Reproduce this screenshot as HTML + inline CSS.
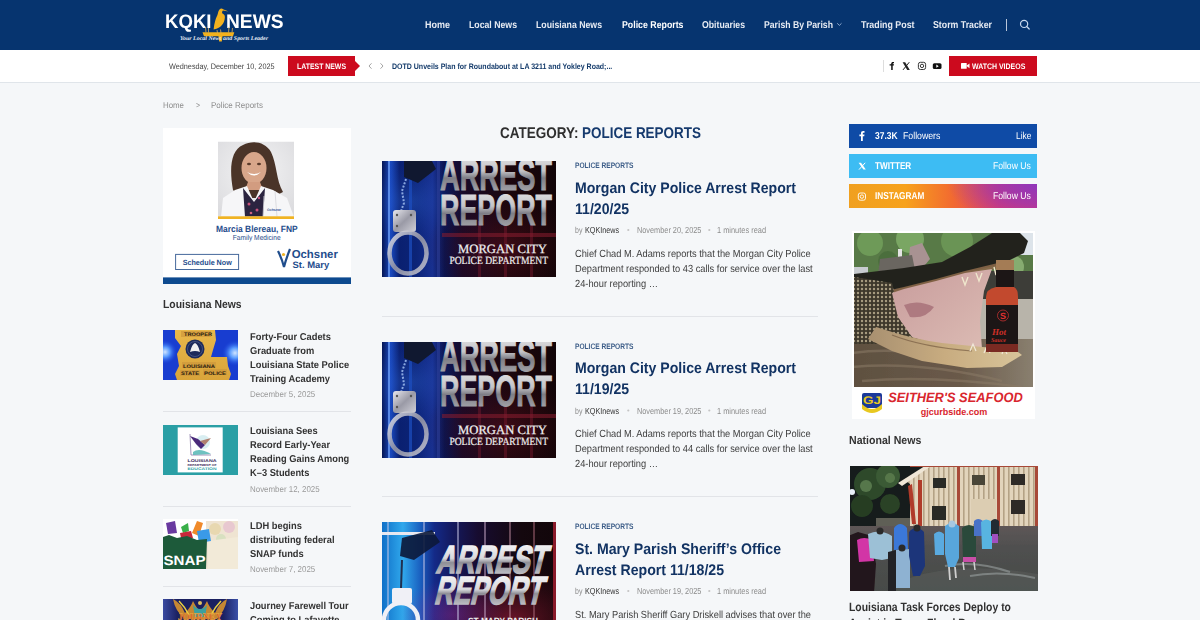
<!DOCTYPE html>
<html><head><meta charset="utf-8">
<style>
*{margin:0;padding:0;box-sizing:border-box}
html,body{width:1200px;height:620px;overflow:hidden;background:#f5f7f9;font-family:"Liberation Sans",sans-serif;color:#313131;text-rendering:geometricPrecision}
.a{position:absolute;white-space:nowrap}
.s{position:absolute}
</style></head><body>
<div class="s" style="left:0;top:0;width:1200px;height:50px;background:#06346f"></div>
<div class="s" style="left:1005.5px;top:19px;width:1px;height:12px;background:#b9c6da"></div>
<div class="s" style="left:0;top:50px;width:1200px;height:33px;background:#fff;border-bottom:1px solid #e0e5ea"></div>
<div class="s" style="left:288px;top:56px;width:67px;height:20px;background:#cc0a1e"></div>
<div class="s" style="left:355px;top:61px;width:0;height:0;border-top:5px solid transparent;border-bottom:5px solid transparent;border-left:5px solid #cc0a1e"></div>
<div class="s" style="left:882.5px;top:60px;width:1px;height:12px;background:#ddd"></div>
<div class="s" style="left:949px;top:56px;width:88px;height:20px;background:#cc0a1e"></div>

<div class="s" style="left:163px;top:128px;width:188px;height:156px;overflow:hidden"><svg width="188" height="156" viewBox="0 0 188 156" style="position:absolute;left:0;top:0">
<defs>
<radialGradient id="p_bg" cx="0.5" cy="0.4" r="0.7"><stop offset="0" stop-color="#f4f4f5"/><stop offset="1" stop-color="#dcdcdf"/></radialGradient>
<clipPath id="p_clip"><rect x="55" y="13.5" width="76" height="75"/></clipPath>
</defs>
<rect width="188" height="156" fill="#fff"/>
<g clip-path="url(#p_clip)">
<rect x="55" y="13.5" width="76" height="75" fill="url(#p_bg)"/>
<path d="M70 62 C66 40 68 22 80 17 C90 12 102 14 108 24 C114 36 113 52 120 64 L108 70 L78 70 Z" fill="#4a3428"/>
<ellipse cx="91" cy="40" rx="12.5" ry="16" fill="#d8a68a"/>
<path d="M84 44 Q91 51 98 44 Q91 48 84 44Z" fill="#fff"/>
<ellipse cx="86" cy="36" rx="2" ry="1.2" fill="#5a3a2a"/><ellipse cx="96" cy="36" rx="2" ry="1.2" fill="#5a3a2a"/>
<path d="M85 54 L97 54 L100 62 L82 62Z" fill="#d29c80"/>
<path d="M58 89 L60 70 L72 62 L84 58 L91 74 L98 58 L110 62 L124 70 L131 89Z" fill="#f6f6f8"/>
<path d="M80 60 L91 74 L102 60 L100 89 L82 89Z" fill="#2b2440"/>
<circle cx="86" cy="76" r="1.5" fill="#c8507a"/><circle cx="94" cy="82" r="1.5" fill="#c8507a"/><circle cx="88" cy="85" r="1.3" fill="#d06080"/><circle cx="96" cy="70" r="1.2" fill="#c8507a"/>
<path d="M101 68 L100 89 M112 63 L114 89" stroke="#d4d4da" stroke-width="0.8" fill="none"/>
<text x="104" y="83" font-family="Liberation Sans" font-size="3.5" font-weight="bold" fill="#3a5a9a">Ochsner</text>
</g>
<rect x="55" y="88.3" width="76" height="2.7" fill="#f0b323"/>
<text x="53" y="104.25" font-family="Liberation Sans" font-weight="bold" font-size="9.2" fill="#1f4d8c" textLength="81.7" lengthAdjust="spacingAndGlyphs">Marcia Blereau, FNP</text>
<text x="69.8" y="112.2" font-family="Liberation Sans" font-size="7.3" fill="#1f4d8c" textLength="47.8" lengthAdjust="spacingAndGlyphs">Family Medicine</text>
<rect x="12.6" y="126.4" width="63" height="15.1" fill="none" stroke="#46699c" stroke-width="1"/>
<text x="19.7" y="136.7" font-family="Liberation Sans" font-weight="bold" font-size="7.5" fill="#1f4d8c" textLength="49.1" lengthAdjust="spacingAndGlyphs">Schedule Now</text>
<path d="M115 123 Q119 131 121 139 Q123 131 127 121" stroke="#1f4d8c" stroke-width="2.2" fill="none"/>
<circle cx="120.5" cy="126.5" r="1.6" fill="#f0b323"/>
<text x="128.7" y="130.4" font-family="Liberation Sans" font-weight="bold" font-size="11.5" fill="#1f4d8c" textLength="46.2" lengthAdjust="spacingAndGlyphs">Ochsner</text>
<text x="129.5" y="139.9" font-family="Liberation Sans" font-weight="bold" font-size="9.3" fill="#1f4d8c" textLength="36.8" lengthAdjust="spacingAndGlyphs">St. Mary</text>
<rect x="0" y="149.4" width="188" height="6.6" fill="#0d4a8f"/>
</svg>
</div>


<div class="s" style="left:163px;top:329.5px;width:75px;height:50px;overflow:hidden"><svg width="75" height="50" viewBox="0 0 75 50">
<defs><radialGradient id="t1l" cx="0.5" cy="0.5" r="0.5"><stop offset="0" stop-color="#cfe4ff"/><stop offset="0.4" stop-color="#5a9cff"/><stop offset="1" stop-color="#1a48e0" stop-opacity="0"/></radialGradient>
<linearGradient id="t1g" x1="0" y1="0" x2="0" y2="1"><stop offset="0" stop-color="#e9b84a"/><stop offset="1" stop-color="#d9a43a"/></linearGradient></defs>
<rect width="75" height="50" fill="#1535c0"/>
<rect x="0" y="0" width="75" height="50" fill="#1e4ae8" opacity="0.4"/>
<circle cx="2" cy="22" r="12" fill="url(#t1l)"/><circle cx="72" cy="23" r="13" fill="url(#t1l)"/>
<path d="M12 0 L52 0 L53 10 L50 20 L48 27 L64 27 L65 36 L68 44 L66 50 L14 50 L12 44 L16 36 L14 24 L18 16 L12 8 Z" fill="url(#t1g)"/>
<circle cx="32" cy="19" r="9.5" fill="#1c2a5a"/><circle cx="32" cy="19" r="7.5" fill="none" stroke="#5a6a9a" stroke-width="0.6"/>
<path d="M27 22 Q29 14 32 13 Q35 14 37 22 Q32 20 27 22Z" fill="#f0f0f0"/>
<rect x="18" y="1" width="30" height="6" fill="#c9923a" opacity="0.6"/>
<rect x="19" y="32" width="34" height="6" fill="#c9923a" opacity="0.55"/><rect x="17" y="40" width="20" height="6" fill="#c9923a" opacity="0.55"/><rect x="40" y="39" width="24" height="6" fill="#c9923a" opacity="0.55"/>
<text x="20" y="37.5" font-family="Liberation Sans" font-weight="bold" font-size="5" fill="#2a2010" textLength="32" lengthAdjust="spacingAndGlyphs">LOUISIANA</text>
<text x="18" y="45" font-family="Liberation Sans" font-weight="bold" font-size="5" fill="#2a2010" textLength="18" lengthAdjust="spacingAndGlyphs">STATE</text>
<text x="41" y="44.5" font-family="Liberation Sans" font-weight="bold" font-size="5" fill="#2a2010" textLength="22" lengthAdjust="spacingAndGlyphs">POLICE</text>
<text x="21" y="6" font-family="Liberation Sans" font-weight="bold" font-size="5" fill="#2a2010" textLength="28" lengthAdjust="spacingAndGlyphs">TROOPER</text>
</svg></div>
<div class="s" style="left:163px;top:424.5px;width:75px;height:50px;overflow:hidden"><svg width="75" height="50" viewBox="0 0 75 50">
<rect width="75" height="50" fill="#2a9fa5"/>
<rect x="14.7" y="2.4" width="45" height="45" fill="#fff"/>
<path d="M27 9 L28 30 L48 30" stroke="#8a7aa8" stroke-width="0.8" fill="none"/>
<path d="M30 27 Q36 22 48 29 L30 30Z" fill="#4ab3b0" opacity="0.8"/>
<circle cx="40" cy="17" r="7" fill="#bfe3e8" opacity="0.6"/>
<path d="M27 11 L35 14 L42 20 L38 24 L33 19 Z" fill="#4a2a7a"/>
<path d="M37 16 L48 13 L42 20Z" fill="#b08070"/>
<text x="24.5" y="36.5" font-family="Liberation Sans" font-weight="bold" font-size="4" fill="#3a2a5a" textLength="29" lengthAdjust="spacingAndGlyphs">LOUISIANA</text>
<text x="24.5" y="40.5" font-family="Liberation Sans" font-weight="bold" font-size="2.8" fill="#3a2a5a" textLength="29" lengthAdjust="spacingAndGlyphs">DEPARTMENT OF</text>
<text x="24.5" y="45" font-family="Liberation Sans" font-weight="bold" font-size="3.8" fill="#2a9fa5" textLength="29" lengthAdjust="spacingAndGlyphs">EDUCATION</text>
</svg></div>
<div class="s" style="left:163px;top:519px;width:75px;height:50px;overflow:hidden"><svg width="75" height="50" viewBox="0 0 75 50">
<rect width="75" height="50" fill="#fff"/>
<rect x="43" y="2" width="32" height="48" fill="#efe4d2"/>
<circle cx="52" cy="10" r="6" fill="#e8d8b0"/><circle cx="66" cy="8" r="6" fill="#e8c8d0"/><circle cx="58" cy="20" r="5" fill="#d8e0c0"/>
<path d="M45 22 L75 18 L75 50 L45 50Z" fill="#f2ead8"/>
<path d="M3 4 L12 2 L14 14 L5 15Z" fill="#6a3aa0"/>
<path d="M18 8 L25 4 L26 12 L20 14Z" fill="#3ab04a"/>
<path d="M29 14 L34 2 L40 4 L36 17Z" fill="#f08a2a"/>
<path d="M34 12 L46 10 L48 22 L36 24Z" fill="#3a9ae8"/>
<path d="M17 14 L28 12 L30 19 L18 19Z" fill="#c8283a"/>
<path d="M0 18 L6 16 L14 19 L24 17 L34 21 L44 20 L43 50 L0 50Z" fill="#1d5a3a"/>
<text x="0.5" y="45.5" font-family="Liberation Sans" font-weight="bold" font-size="13.5" fill="#fff" textLength="42" lengthAdjust="spacingAndGlyphs">SNAP</text>
</svg></div>
<div class="s" style="left:163px;top:598.5px;width:75px;height:50px;overflow:hidden"><svg width="75" height="50" viewBox="0 0 75 50">
<defs><linearGradient id="jg" x1="0" y1="0" x2="1" y2="0"><stop offset="0" stop-color="#3a4aa0"/><stop offset="0.2" stop-color="#1a2060"/><stop offset="0.8" stop-color="#1a2060"/><stop offset="1" stop-color="#3a50a8"/></linearGradient></defs>
<rect width="75" height="50" fill="url(#jg)"/>
<path d="M10 0 Q18 4 22 14 Q28 8 30 2 Q34 10 37 12 Q40 10 44 2 Q46 8 52 14 Q56 4 64 0 Q62 12 54 20 L22 20 Q12 12 10 0Z" fill="#d8922e" opacity="0.9"/>
<path d="M16 2 Q22 8 26 16 M58 2 Q52 8 48 16" stroke="#e8d040" stroke-width="1.5" fill="none"/>
<path d="M30 6 Q37 14 44 6 L42 18 L32 18Z" fill="#3aa0a0"/>
<circle cx="37" cy="4" r="2" fill="#e0c060"/>
<text x="15" y="21" font-family="Liberation Serif" font-weight="bold" font-size="10" fill="#d8502a" stroke="#e8b040" stroke-width="0.4" textLength="44" lengthAdjust="spacingAndGlyphs">JOURNEY</text>
</svg></div>

<div class="s" style="left:163px;top:411px;width:188px;height:1px;background:#e2e4e8"></div>

<div class="s" style="left:163px;top:506px;width:188px;height:1px;background:#e2e4e8"></div>

<div class="s" style="left:163px;top:586px;width:188px;height:1px;background:#e2e4e8"></div>


<div class="s" style="left:382px;top:161px;width:174px;height:116px;overflow:hidden"><svg width="174" height="116" viewBox="0 0 174 116" style="position:absolute;left:0;top:0">
<defs>
<linearGradient id="bgX" x1="0" y1="0" x2="1" y2="0">
<stop offset="0" stop-color="#061654"/><stop offset="0.05" stop-color="#1a4ac0"/><stop offset="0.1" stop-color="#0a2070"/><stop offset="0.2" stop-color="#0c2478"/><stop offset="0.29" stop-color="#183090"/><stop offset="0.36" stop-color="#0a1450"/><stop offset="0.46" stop-color="#180a28"/><stop offset="0.72" stop-color="#1c070e"/><stop offset="1" stop-color="#120508"/>
</linearGradient>
<radialGradient id="glow" cx="0.15" cy="0.35" r="0.35">
<stop offset="0" stop-color="#3a7df5" stop-opacity="0.3"/><stop offset="1" stop-color="#1a3fb0" stop-opacity="0"/>
</radialGradient>
<radialGradient id="redg" cx="0.7" cy="0.75" r="0.45">
<stop offset="0" stop-color="#6a1020" stop-opacity="0.45"/><stop offset="1" stop-color="#3a0810" stop-opacity="0"/>
</radialGradient>
<linearGradient id="silver" x1="0" y1="0" x2="0" y2="1">
<stop offset="0" stop-color="#e8e8ea"/><stop offset="0.4" stop-color="#c4c4c8"/><stop offset="0.55" stop-color="#7e7e86"/><stop offset="1" stop-color="#b8b8bc"/>
</linearGradient>
<linearGradient id="cuff" x1="0" y1="0" x2="1" y2="1">
<stop offset="0" stop-color="#e8e8ee"/><stop offset="0.5" stop-color="#9a9aa6"/><stop offset="1" stop-color="#d0d0d8"/>
</linearGradient>
</defs>
<rect width="174" height="116" fill="url(#bgX)"/>
<rect width="174" height="116" fill="url(#glow)"/>
<rect width="174" height="116" fill="url(#redg)"/>
<rect x="6" y="0" width="2" height="116" fill="#6a9cf5" opacity="0.8"/>
<rect x="27" y="0" width="3" height="116" fill="#1d4fc0" opacity="0.7"/>
<rect x="55" y="0" width="3" height="116" fill="#2d3f9a" opacity="0.6"/>
<rect x="96" y="60" width="3" height="56" fill="#7a1a2e" opacity="0.45"/>
<rect x="122" y="60" width="3" height="56" fill="#7a1a2e" opacity="0.45"/>
<rect x="148" y="60" width="3" height="56" fill="#7a1a2e" opacity="0.45"/>
<rect x="60" y="72" width="114" height="4" fill="#8a1e30" opacity="0.55"/>
<path d="M22 0 L50 0 L54 8 L36 22 L22 16 Z" fill="#101830"/>
<path d="M24 18 L20 30 L22 42 L19 50" stroke="#8aa8e0" stroke-width="2" fill="none" stroke-dasharray="2 1.5"/>
<rect x="11" y="49" width="23" height="22" rx="3" fill="url(#cuff)"/>
<circle cx="15" cy="54" r="1.2" fill="#555"/><circle cx="29" cy="54" r="1.2" fill="#555"/><circle cx="15" cy="65" r="1.2" fill="#555"/>
<ellipse cx="26" cy="92" rx="18.5" ry="20.5" fill="none" stroke="url(#cuff)" stroke-width="4.5" opacity="0.85"/>
<text x="58" y="28.6" font-family="Liberation Sans" font-weight="bold" font-size="43.6" fill="url(#silver)" stroke="url(#silver)" stroke-width="1" textLength="112" lengthAdjust="spacingAndGlyphs">ARREST</text>
<text x="58" y="64" font-family="Liberation Sans" font-weight="bold" font-size="43.6" fill="url(#silver)" stroke="url(#silver)" stroke-width="1" textLength="112" lengthAdjust="spacingAndGlyphs">REPORT</text>
<text x="76" y="91.5" font-family="Liberation Serif" font-size="12.8" stroke="#f0f0f0" stroke-width="0.25" fill="#f0f0f0" textLength="89" lengthAdjust="spacingAndGlyphs">MORGAN CITY</text>
<text x="67.4" y="103" font-family="Liberation Serif" font-size="11" stroke="#f0f0f0" stroke-width="0.2" fill="#f0f0f0" textLength="98.6" lengthAdjust="spacingAndGlyphs">POLICE DEPARTMENT</text>
</svg>
</div>
<div class="s" style="left:382px;top:316px;width:436px;height:1px;background:#e2e4e8"></div>
<div class="s" style="left:382px;top:342px;width:174px;height:116px;overflow:hidden"><svg width="174" height="116" viewBox="0 0 174 116" style="position:absolute;left:0;top:0">
<defs>
<linearGradient id="b_bgX" x1="0" y1="0" x2="1" y2="0">
<stop offset="0" stop-color="#061654"/><stop offset="0.05" stop-color="#1a4ac0"/><stop offset="0.1" stop-color="#0a2070"/><stop offset="0.2" stop-color="#0c2478"/><stop offset="0.29" stop-color="#183090"/><stop offset="0.36" stop-color="#0a1450"/><stop offset="0.46" stop-color="#180a28"/><stop offset="0.72" stop-color="#1c070e"/><stop offset="1" stop-color="#120508"/>
</linearGradient>
<radialGradient id="b_glow" cx="0.15" cy="0.35" r="0.35">
<stop offset="0" stop-color="#3a7df5" stop-opacity="0.3"/><stop offset="1" stop-color="#1a3fb0" stop-opacity="0"/>
</radialGradient>
<radialGradient id="b_redg" cx="0.7" cy="0.75" r="0.45">
<stop offset="0" stop-color="#6a1020" stop-opacity="0.45"/><stop offset="1" stop-color="#3a0810" stop-opacity="0"/>
</radialGradient>
<linearGradient id="b_silver" x1="0" y1="0" x2="0" y2="1">
<stop offset="0" stop-color="#e8e8ea"/><stop offset="0.4" stop-color="#c4c4c8"/><stop offset="0.55" stop-color="#7e7e86"/><stop offset="1" stop-color="#b8b8bc"/>
</linearGradient>
<linearGradient id="b_cuff" x1="0" y1="0" x2="1" y2="1">
<stop offset="0" stop-color="#e8e8ee"/><stop offset="0.5" stop-color="#9a9aa6"/><stop offset="1" stop-color="#d0d0d8"/>
</linearGradient>
</defs>
<rect width="174" height="116" fill="url(#b_bgX)"/>
<rect width="174" height="116" fill="url(#b_glow)"/>
<rect width="174" height="116" fill="url(#b_redg)"/>
<rect x="6" y="0" width="2" height="116" fill="#6a9cf5" opacity="0.8"/>
<rect x="27" y="0" width="3" height="116" fill="#1d4fc0" opacity="0.7"/>
<rect x="55" y="0" width="3" height="116" fill="#2d3f9a" opacity="0.6"/>
<rect x="96" y="60" width="3" height="56" fill="#7a1a2e" opacity="0.45"/>
<rect x="122" y="60" width="3" height="56" fill="#7a1a2e" opacity="0.45"/>
<rect x="148" y="60" width="3" height="56" fill="#7a1a2e" opacity="0.45"/>
<rect x="60" y="72" width="114" height="4" fill="#8a1e30" opacity="0.55"/>
<path d="M22 0 L50 0 L54 8 L36 22 L22 16 Z" fill="#101830"/>
<path d="M24 18 L20 30 L22 42 L19 50" stroke="#8aa8e0" stroke-width="2" fill="none" stroke-dasharray="2 1.5"/>
<rect x="11" y="49" width="23" height="22" rx="3" fill="url(#b_cuff)"/>
<circle cx="15" cy="54" r="1.2" fill="#555"/><circle cx="29" cy="54" r="1.2" fill="#555"/><circle cx="15" cy="65" r="1.2" fill="#555"/>
<ellipse cx="26" cy="92" rx="18.5" ry="20.5" fill="none" stroke="url(#b_cuff)" stroke-width="4.5" opacity="0.85"/>
<text x="58" y="28.6" font-family="Liberation Sans" font-weight="bold" font-size="43.6" fill="url(#b_silver)" stroke="url(#b_silver)" stroke-width="1" textLength="112" lengthAdjust="spacingAndGlyphs">ARREST</text>
<text x="58" y="64" font-family="Liberation Sans" font-weight="bold" font-size="43.6" fill="url(#b_silver)" stroke="url(#b_silver)" stroke-width="1" textLength="112" lengthAdjust="spacingAndGlyphs">REPORT</text>
<text x="76" y="91.5" font-family="Liberation Serif" font-size="12.8" stroke="#f0f0f0" stroke-width="0.25" fill="#f0f0f0" textLength="89" lengthAdjust="spacingAndGlyphs">MORGAN CITY</text>
<text x="67.4" y="103" font-family="Liberation Serif" font-size="11" stroke="#f0f0f0" stroke-width="0.2" fill="#f0f0f0" textLength="98.6" lengthAdjust="spacingAndGlyphs">POLICE DEPARTMENT</text>
</svg>
</div>
<div class="s" style="left:382px;top:496px;width:436px;height:1px;background:#e2e4e8"></div>
<div class="s" style="left:382px;top:522px;width:174px;height:116px;overflow:hidden"><svg width="174" height="116" viewBox="0 0 174 116" style="position:absolute;left:0;top:0">
<defs>
<linearGradient id="c_bg" x1="0" y1="0" x2="1" y2="0">
<stop offset="0" stop-color="#1070c8"/><stop offset="0.12" stop-color="#30a8ec"/><stop offset="0.22" stop-color="#1a60c0"/><stop offset="0.3" stop-color="#142a88"/><stop offset="0.4" stop-color="#141a60"/><stop offset="0.55" stop-color="#170c30"/><stop offset="0.8" stop-color="#14080e"/><stop offset="1" stop-color="#12060a"/>
</linearGradient>
<radialGradient id="c_red" cx="0.75" cy="0.85" r="0.5">
<stop offset="0" stop-color="#8a1830" stop-opacity="0.75"/><stop offset="1" stop-color="#3a0810" stop-opacity="0"/>
</radialGradient>
<radialGradient id="c_pur" cx="0.4" cy="0.8" r="0.3">
<stop offset="0" stop-color="#8a2a9a" stop-opacity="0.45"/><stop offset="1" stop-color="#8a2a9a" stop-opacity="0"/>
</radialGradient>
<linearGradient id="c_silver" x1="0" y1="0" x2="0" y2="1">
<stop offset="0" stop-color="#ffffff"/><stop offset="0.45" stop-color="#d8d8dc"/><stop offset="0.55" stop-color="#8e8e96"/><stop offset="1" stop-color="#e0e0e4"/>
</linearGradient>
</defs>
<rect width="174" height="116" fill="url(#c_bg)"/>
<rect width="174" height="116" fill="url(#c_red)"/>
<rect width="174" height="116" fill="url(#c_pur)"/>
<g fill="#c8c8e8" opacity="0.5">
<rect x="5" y="0" width="2" height="116"/><rect x="41" y="0" width="2" height="116"/><rect x="75" y="0" width="2" height="116"/>
<rect x="102" y="0" width="2" height="116" fill="#c8a8c8"/><rect x="127" y="0" width="2" height="116" fill="#b88898"/><rect x="151" y="0" width="2" height="116" fill="#a86878"/>
</g>
<rect x="171" y="0" width="3" height="116" fill="#8a1a2a"/>
<rect x="0" y="10" width="53" height="3" fill="#e8e8f0"/>
<path d="M20 16 L50 8 L58 20 L32 38 L18 34 Z" fill="#0c1838" opacity="0.9"/>
<path d="M20 38 L19 66" stroke="#203050" stroke-width="2"/>
<rect x="10" y="66" width="20" height="16" rx="2" fill="#f0f0f6"/>
<ellipse cx="19" cy="98" rx="17" ry="17" fill="none" stroke="#f0f0f6" stroke-width="4.5"/>
<g transform="skewX(-14)">
<text x="66" y="51" font-family="Liberation Sans" font-weight="bold" font-size="39" fill="url(#c_silver)" stroke="url(#c_silver)" stroke-width="1.6" textLength="110" lengthAdjust="spacingAndGlyphs">ARREST</text>
<text x="72" y="82" font-family="Liberation Sans" font-weight="bold" font-size="39" fill="url(#c_silver)" stroke="url(#c_silver)" stroke-width="1.6" textLength="108" lengthAdjust="spacingAndGlyphs">REPORT</text>
</g>
<text x="86" y="102" font-family="Liberation Sans" font-weight="bold" font-size="9" fill="#f0f0f0" textLength="70" lengthAdjust="spacingAndGlyphs">ST MARY PARISH</text>
</svg>
</div>

<div class="s" style="left:849px;top:124px;width:188px;height:24px;background:#0f4ba6"></div>
<div class="s" style="left:849px;top:154px;width:188px;height:24px;background:#3dbcf3"></div>
<div class="s" style="left:849px;top:184px;width:188px;height:24px;background:radial-gradient(ellipse 90px 40px at 100% 0%,rgba(140,55,190,0.95) 0%,rgba(140,55,190,0.6) 50%,rgba(140,55,190,0) 100%),linear-gradient(90deg,#f0a020 0%,#f7a21c 30%,#f26a30 55%,#e03a6a 80%,#d8357a 100%)"></div>

<div class="s" style="left:852px;top:231px;width:183px;height:188px;overflow:hidden"><svg width="183" height="189" viewBox="0 0 183 189" style="position:absolute;left:0;top:0">
<defs>
<clipPath id="sf_c"><rect x="2" y="2" width="179" height="154"/></clipPath>
<linearGradient id="sf_dock" x1="0" y1="0" x2="1" y2="0"><stop offset="0" stop-color="#5e5040"/><stop offset="0.6" stop-color="#6a5a4a"/><stop offset="1" stop-color="#8a8070"/></linearGradient>
<linearGradient id="sf_jaw" x1="0" y1="0" x2="1" y2="0"><stop offset="0" stop-color="#a89070"/><stop offset="0.5" stop-color="#c8ac80"/><stop offset="1" stop-color="#d8c49a"/></linearGradient>
<linearGradient id="sf_pink" x1="0" y1="0" x2="1" y2="1"><stop offset="0" stop-color="#c89c9c"/><stop offset="1" stop-color="#dcbcb4"/></linearGradient>
<pattern id="sf_sc" width="4" height="4" patternUnits="userSpaceOnUse"><rect width="4" height="4" fill="#3e382c"/><circle cx="2" cy="2" r="1.2" fill="#a89c80"/></pattern>
<filter id="sf_b"><feGaussianBlur stdDeviation="0.6"/></filter>
</defs>
<rect width="183" height="189" fill="#fff"/>
<g clip-path="url(#sf_c)"><g filter="url(#sf_b)">
<rect x="0" y="0" width="183" height="160" fill="#587a46"/>
<circle cx="18" cy="12" r="13" fill="#6e9a58"/><circle cx="58" cy="8" r="14" fill="#7aa664"/><circle cx="105" cy="10" r="16" fill="#6a9454"/><circle cx="160" cy="36" r="12" fill="#86ac70"/><circle cx="36" cy="30" r="10" fill="#4c6e3e"/><circle cx="130" cy="26" r="10" fill="#5e8a4c"/>
<rect x="166" y="0" width="17" height="24" fill="#dde4ea"/>
<rect x="0" y="36" width="16" height="12" fill="#c8ccd0"/>
<path d="M46 18 L50 18 L50 42 L46 42Z" fill="#e4e4e4"/><path d="M58 16 L70 12 L78 28 L68 40 L56 36Z" fill="#a89292"/><path d="M28 28 L60 24 L64 44 L26 44Z" fill="#6a6660"/>
<rect x="86" y="40" width="97" height="30" fill="#3c3c38"/>
<rect x="0" y="44" width="90" height="30" fill="#4a4842"/>
<rect x="120" y="68" width="63" height="50" fill="#b8b4aa"/>
<rect x="0" y="108" width="183" height="52" fill="url(#sf_dock)"/>
<path d="M0 122 Q60 114 130 136 M0 136 Q70 130 150 150 M10 150 Q80 144 170 156" stroke="#8a7a66" stroke-width="2.5" fill="none" opacity="0.55"/>
<path d="M2 43 L52 37 L90 31 L118 16 L140 2 L166 0 L176 10 L172 22 L150 33 L113 42 L84 50 L52 58 L21 65 L2 68Z" fill="#24241e"/>
<path d="M21 63 L52 56 L84 48 L113 40 L150 31 L160 30 L150 36 L113 46 L84 54 L52 62 L24 70Z" fill="#8a6848" opacity="0.9"/>
<path d="M2 46 L40 52 L44 70 L60 95 L70 112 L40 113 L2 113Z" fill="url(#sf_sc)"/>
<path d="M40 62 L52 58 L84 50 L113 42 L140 38 L132 60 L128 90 L130 118 L90 116 L60 106 L46 86Z" fill="url(#sf_pink)"/>
<path d="M52 74 Q66 68 82 76 Q74 88 58 86Z" fill="#ae7a80"/>
<path d="M24 96 Q60 108 90 112 L130 116 L162 118 L170 124 L150 136 L115 137 L70 130 L40 120 L16 108Z" fill="url(#sf_jaw)"/>
<path d="M40 104 Q70 116 120 120" stroke="#6a5038" stroke-width="1.2" fill="none" opacity="0.6"/>
<path d="M110 46 L113 54 L116 46 M124 42 L127 50 L130 42 M142 36 L144 44 L146 36" stroke="#efe6cc" stroke-width="1.4" fill="none"/>
<path d="M118 120 L121 113 L124 120 M132 122 L135 115 L138 122 M150 123 L152 117 L155 123" stroke="#f0e8d8" stroke-width="1.2" fill="none"/>
<rect x="144" y="29" width="18" height="10" fill="#a47c54"/>
<rect x="144" y="39" width="18" height="17" fill="#1a1818"/>
<path d="M144 56 L162 56 Q166 58 166 66 L166 74 L134 74 L134 66 Q134 58 144 56Z" fill="#c24a2e"/>
<rect x="134" y="74" width="32" height="43" fill="#1c1616"/>
<rect x="134" y="113" width="32" height="8" fill="#7a2a20"/>
</g>
<circle cx="151" cy="84.5" r="5.5" fill="none" stroke="#c03030" stroke-width="0.8"/>
<text x="148" y="88" font-family="Liberation Sans" font-weight="bold" font-size="9" fill="#e03030">S</text>
<text x="140" y="104" font-family="Liberation Serif" font-style="italic" font-weight="bold" font-size="9" fill="#d03028">Hot</text>
<text x="139" y="111" font-family="Liberation Serif" font-style="italic" font-weight="bold" font-size="6" fill="#d03028">Sauce</text>
</g>
<rect x="10" y="162" width="20" height="15" rx="2" fill="#1a3a9a"/>
<path d="M10 173 Q20 183 30 173 L30 178 Q20 186 10 178Z" fill="#e8c820"/>
<text x="11" y="173" font-family="Liberation Sans" font-weight="bold" font-size="11" fill="#e8c820" textLength="18" lengthAdjust="spacingAndGlyphs">GJ</text>
<text x="36.2" y="170.7" font-family="Liberation Sans" font-weight="bold" font-style="italic" font-size="13.5" fill="#d9262e" textLength="134.5" lengthAdjust="spacingAndGlyphs">SEITHER'S SEAFOOD</text>
<text x="68.7" y="183.6" font-family="Liberation Sans" font-weight="bold" font-size="9.5" fill="#d9262e" textLength="66.6" lengthAdjust="spacingAndGlyphs">gjcurbside.com</text>
</svg>
</div>
<div class="s" style="left:849.5px;top:466px;width:188px;height:125px;overflow:hidden"><svg width="188" height="125" viewBox="0 0 188 125" style="position:absolute;left:0;top:0">
<defs>
<linearGradient id="nn_g" x1="0" y1="0" x2="0" y2="1"><stop offset="0" stop-color="#5e5656"/><stop offset="0.3" stop-color="#505050"/><stop offset="1" stop-color="#464a47"/></linearGradient>
<pattern id="nn_st" width="5" height="10" patternUnits="userSpaceOnUse"><rect width="5" height="10" fill="#e2d4bc"/><rect x="3" width="1.6" height="10" fill="#b4a286"/></pattern>
<filter id="nn_b"><feGaussianBlur stdDeviation="0.7"/></filter>
</defs>
<g filter="url(#nn_b)">
<rect x="-2" y="-2" width="192" height="129" fill="#161c1a"/>
<circle cx="20" cy="18" r="16" fill="#2e4a2c"/><circle cx="38" cy="10" r="12" fill="#3a5a34"/><circle cx="12" cy="40" r="11" fill="#263e24"/><circle cx="40" cy="38" r="10" fill="#2a4226"/>
<circle cx="16" cy="20" r="6" fill="#6a8a5a" opacity="0.7"/><circle cx="40" cy="12" r="5" fill="#6a8a5a" opacity="0.6"/>
<circle cx="2" cy="26" r="3" fill="#e8f0f8"/>
<path d="M56 15 L80 -2 L190 -2 L190 60 L60 60 L60 18Z" fill="url(#nn_st)"/>
<path d="M48 17 L78 -2 L84 -2 L52 20Z" fill="#efe6d6"/>
<rect x="60" y="-2" width="130" height="3" fill="#a84a38"/>
<path d="M58 20 L62 58 L66 58 L62 18Z" fill="#b03a2a"/>
<rect x="68" y="14" width="4" height="46" fill="#b03a2a"/><rect x="107" y="0" width="3" height="60" fill="#a84a38"/><rect x="147" y="0" width="3" height="60" fill="#a84a38"/><rect x="185" y="0" width="3" height="60" fill="#a84a38"/>
<rect x="83" y="12" width="13" height="10" fill="#2a2a26"/><rect x="122" y="9" width="13" height="10" fill="#4a4438"/><rect x="161" y="8" width="14" height="11" fill="#2e2c28"/>
<rect x="82" y="40" width="14" height="14" fill="#2a2a26"/><rect x="161" y="34" width="14" height="14" fill="#2e2c28"/>
<rect x="121" y="33" width="25" height="25" fill="#dccdb2"/>
<rect x="26" y="52" width="34" height="9" fill="#5e5e56"/>
<rect x="-2" y="60" width="192" height="67" fill="url(#nn_g)"/>
<path d="M60 112 Q110 95 188 108 L188 125 L40 125Z" fill="#5a5e5c" opacity="0.5"/>
<path d="M95 100 Q125 94 160 106 M120 110 Q150 104 185 112" stroke="#a8b0b0" stroke-width="2" fill="none" opacity="0.5"/>
<path d="M-2 70 L8 66 L22 70 L26 98 L24 127 L-2 127Z" fill="#24161c"/>
<path d="M7 74 Q14 70 22 74 L24 95 L9 96Z" fill="#d236a6"/>
<path d="M18 68 Q30 62 42 70 L42 92 L32 94 L20 92Z" fill="#9cc0d6"/>
<circle cx="30" cy="65" r="3.5" fill="#2a2a2a"/>
<path d="M44 62 Q50 54 57 62 L58 83 L44 84Z" fill="#3a78d8"/>
<path d="M38 86 L46 84 L46 127 L38 127Z" fill="#222428"/>
<path d="M46 84 L60 83 L60 122 L46 122Z" fill="#8eb2d2"/>
<circle cx="52" cy="82" r="3.5" fill="#2a2a2a"/>
<path d="M59 66 Q66 58 74 66 L75 100 L70 110 L63 110 L59 90Z" fill="#1c347a"/>
<circle cx="67" cy="62" r="3.5" fill="#2a2a2a"/>
<path d="M84 68 Q89 63 94 68 L94 89 L85 89Z" fill="#5aaae0"/>
<path d="M95 60 Q102 54 109 60 L109 92 L105 101 L98 101 L95 88Z" fill="#58a6dc"/>
<circle cx="102" cy="58" r="3.5" fill="#a8c8e0"/>
<path d="M99 101 L100 114 M105 101 L106 112" stroke="#d0d0d0" stroke-width="1.8"/>
<path d="M112 62 Q119 56 126 62 L126 93 L113 94Z" fill="#2a4a3a"/>
<rect x="113" y="91" width="13" height="5" fill="#c850a8"/>
<path d="M113 96 L114 104 M124 96 L125 104" stroke="#d0d0d0" stroke-width="1.5"/>
<path d="M124 55 Q128 51 133 55 L133 70 L124 70Z" fill="#4a72c8"/>
<path d="M131 56 Q136 51 142 56 L142 83 L132 83Z" fill="#58b4e0"/>
<path d="M141 55 Q145 51 149 55 L149 70 L141 70Z" fill="#222a30"/>
<rect x="142" y="68" width="6" height="9" fill="#a050c0"/>
</g>
</svg></div>

<div id="lg1" class="a" style="left:164.50px;top:12.00px;font-size:19.5px;line-height:20px;font-weight:bold;color:#fff;transform:scaleX(0.9538);transform-origin:0 0;">KQKI</div>
<div id="lg2" class="a" style="left:226.00px;top:12.00px;font-size:19.5px;line-height:20px;font-weight:bold;color:#fff;transform:scaleX(0.9829);transform-origin:0 0;">NEWS</div>
<div id="nav0" class="a" style="left:425.00px;top:20.00px;font-size:10px;line-height:12px;font-weight:bold;color:#e6ebf3;transform:scaleX(0.8994);transform-origin:0 0;">Home</div>
<div id="nav1" class="a" style="left:469.00px;top:20.00px;font-size:10px;line-height:12px;font-weight:bold;color:#e6ebf3;transform:scaleX(0.8722);transform-origin:0 0;">Local News</div>
<div id="nav2" class="a" style="left:536.00px;top:20.00px;font-size:10px;line-height:12px;font-weight:bold;color:#e6ebf3;transform:scaleX(0.8733);transform-origin:0 0;">Louisiana News</div>
<div id="nav3" class="a" style="left:621.50px;top:20.00px;font-size:10px;line-height:12px;font-weight:bold;color:#fff;transform:scaleX(0.8782);transform-origin:0 0;">Police Reports</div>
<div id="nav4" class="a" style="left:702.00px;top:20.00px;font-size:10px;line-height:12px;font-weight:bold;color:#e6ebf3;transform:scaleX(0.8692);transform-origin:0 0;">Obituaries</div>
<div id="nav5" class="a" style="left:764.00px;top:20.00px;font-size:10px;line-height:12px;font-weight:bold;color:#e6ebf3;transform:scaleX(0.8681);transform-origin:0 0;">Parish By Parish</div>
<div id="nav6" class="a" style="left:861.00px;top:20.00px;font-size:10px;line-height:12px;font-weight:bold;color:#e6ebf3;transform:scaleX(0.8834);transform-origin:0 0;">Trading Post</div>
<div id="nav7" class="a" style="left:933.00px;top:20.00px;font-size:10px;line-height:12px;font-weight:bold;color:#e6ebf3;transform:scaleX(0.8771);transform-origin:0 0;">Storm Tracker</div>
<div id="date" class="a" style="left:169.00px;top:62.00px;font-size:8px;line-height:10px;font-weight:normal;color:#444;transform:scaleX(0.9078);transform-origin:0 0;">Wednesday, December 10, 2025</div>
<div id="latest" class="a" style="left:297.00px;top:62.00px;font-size:8px;line-height:10px;font-weight:bold;color:#fff;transform:scaleX(0.8634);transform-origin:0 0;">LATEST NEWS</div>
<div id="dotd" class="a" style="left:392.20px;top:62.00px;font-size:8px;line-height:10px;font-weight:bold;color:#133a6a;transform:scaleX(0.8761);transform-origin:0 0;">DOTD Unveils Plan for Roundabout at LA 3211 and Yokley Road;...</div>
<div id="watch" class="a" style="left:971.70px;top:62.00px;font-size:8px;line-height:10px;font-weight:bold;color:#fff;transform:scaleX(0.8711);transform-origin:0 0;">WATCH VIDEOS</div>
<div id="bc1" class="a" style="left:163.00px;top:100.00px;font-size:8.5px;line-height:10px;font-weight:normal;color:#8c8c8c;transform:scaleX(0.9256);transform-origin:0 0;">Home</div>
<div id="bc2" class="a" style="left:195.60px;top:100.00px;font-size:8.5px;line-height:10px;font-weight:normal;color:#8c8c8c;transform:scaleX(0.8050);transform-origin:0 0;">&gt;</div>
<div id="bc3" class="a" style="left:211.00px;top:100.00px;font-size:8.5px;line-height:10px;font-weight:normal;color:#8c8c8c;transform:scaleX(0.9406);transform-origin:0 0;">Police Reports</div>
<div id="cat1" class="a" style="left:499.50px;top:125.00px;font-size:15.5px;line-height:18px;font-weight:bold;color:#2f2f2f;transform:scaleX(0.8710);transform-origin:0 0;">CATEGORY:</div>
<div id="cat2" class="a" style="left:581.70px;top:125.00px;font-size:15.5px;line-height:18px;font-weight:bold;color:#163a6e;transform:scaleX(0.8690);transform-origin:0 0;">POLICE REPORTS</div>
<div id="ac0" class="a" style="left:575.00px;top:161.00px;font-size:8px;line-height:10px;font-weight:bold;color:#3c5d88;transform:scaleX(0.8276);transform-origin:0 0;">POLICE REPORTS</div>
<div id="at0" class="a" style="left:575.00px;top:179.00px;font-size:15.3px;line-height:20.5px;font-weight:bold;color:#123363;transform:scaleX(0.9209);transform-origin:0 0;">Morgan City Police Arrest Report<br>11/20/25</div>
<div id="ab0" class="a" style="left:575.00px;top:225.00px;font-size:8.7px;line-height:10px;font-weight:normal;color:#8c8c8c;transform:scaleX(0.8054);transform-origin:0 0;">by</div>
<div id="ak0" class="a" style="left:584.70px;top:225.00px;font-size:8.7px;line-height:10px;font-weight:normal;color:#333;transform:scaleX(0.8283);transform-origin:0 0;">KQKInews</div>
<div id="ad0" class="a" style="left:636.60px;top:225.00px;font-size:8.7px;line-height:10px;font-weight:normal;color:#8c8c8c;transform:scaleX(0.8439);transform-origin:0 0;">November 20, 2025</div>
<div id="am0" class="a" style="left:717.00px;top:225.00px;font-size:8.7px;line-height:10px;font-weight:normal;color:#8c8c8c;transform:scaleX(0.8526);transform-origin:0 0;">1 minutes read</div>
<div id="ae0" class="a" style="left:575.00px;top:247.00px;font-size:10.3px;line-height:15px;font-weight:normal;color:#3d3d3d;transform:scaleX(0.9009);transform-origin:0 0;">Chief Chad M. Adams reports that the Morgan City Police<br>Department responded to 43 calls for service over the last<br>24-hour reporting &#8230;</div>
<div id="ac1" class="a" style="left:575.00px;top:342.00px;font-size:8px;line-height:10px;font-weight:bold;color:#3c5d88;transform:scaleX(0.8276);transform-origin:0 0;">POLICE REPORTS</div>
<div id="at1" class="a" style="left:575.00px;top:359.00px;font-size:15.3px;line-height:20.5px;font-weight:bold;color:#123363;transform:scaleX(0.9209);transform-origin:0 0;">Morgan City Police Arrest Report<br>11/19/25</div>
<div id="ab1" class="a" style="left:575.00px;top:406.00px;font-size:8.7px;line-height:10px;font-weight:normal;color:#8c8c8c;transform:scaleX(0.8054);transform-origin:0 0;">by</div>
<div id="ak1" class="a" style="left:584.70px;top:406.00px;font-size:8.7px;line-height:10px;font-weight:normal;color:#333;transform:scaleX(0.8283);transform-origin:0 0;">KQKInews</div>
<div id="ad1" class="a" style="left:636.60px;top:406.00px;font-size:8.7px;line-height:10px;font-weight:normal;color:#8c8c8c;transform:scaleX(0.8439);transform-origin:0 0;">November 19, 2025</div>
<div id="am1" class="a" style="left:717.00px;top:406.00px;font-size:8.7px;line-height:10px;font-weight:normal;color:#8c8c8c;transform:scaleX(0.8526);transform-origin:0 0;">1 minutes read</div>
<div id="ae1" class="a" style="left:575.00px;top:427.00px;font-size:10.3px;line-height:15px;font-weight:normal;color:#3d3d3d;transform:scaleX(0.9009);transform-origin:0 0;">Chief Chad M. Adams reports that the Morgan City Police<br>Department responded to 44 calls for service over the last<br>24-hour reporting &#8230;</div>
<div id="ac2" class="a" style="left:575.00px;top:522.00px;font-size:8px;line-height:10px;font-weight:bold;color:#3c5d88;transform:scaleX(0.8276);transform-origin:0 0;">POLICE REPORTS</div>
<div id="at2" class="a" style="left:575.00px;top:540.00px;font-size:15.3px;line-height:20.5px;font-weight:bold;color:#123363;transform:scaleX(0.9225);transform-origin:0 0;">St. Mary Parish Sheriff&#8217;s Office<br>Arrest Report 11/18/25</div>
<div id="ab2" class="a" style="left:575.00px;top:586.00px;font-size:8.7px;line-height:10px;font-weight:normal;color:#8c8c8c;transform:scaleX(0.8054);transform-origin:0 0;">by</div>
<div id="ak2" class="a" style="left:584.70px;top:586.00px;font-size:8.7px;line-height:10px;font-weight:normal;color:#333;transform:scaleX(0.8283);transform-origin:0 0;">KQKInews</div>
<div id="ad2" class="a" style="left:636.60px;top:586.00px;font-size:8.7px;line-height:10px;font-weight:normal;color:#8c8c8c;transform:scaleX(0.8439);transform-origin:0 0;">November 19, 2025</div>
<div id="am2" class="a" style="left:717.00px;top:586.00px;font-size:8.7px;line-height:10px;font-weight:normal;color:#8c8c8c;transform:scaleX(0.8526);transform-origin:0 0;">1 minutes read</div>
<div id="ae2" class="a" style="left:575.00px;top:608.00px;font-size:10.3px;line-height:15px;font-weight:normal;color:#3d3d3d;transform:scaleX(0.8991);transform-origin:0 0;">St. Mary Parish Sheriff Gary Driskell advises that over the</div>
<div id="lnh" class="a" style="left:163.00px;top:298.00px;font-size:11.5px;line-height:14px;font-weight:bold;color:#333;transform:scaleX(0.9043);transform-origin:0 0;">Louisiana News</div>
<div id="st0" class="a" style="left:250.20px;top:331.00px;font-size:10px;line-height:14.07px;font-weight:bold;color:#333;transform:scaleX(0.9335);transform-origin:0 0;">Forty-Four Cadets<br>Graduate from<br>Louisiana State Police<br>Training Academy</div>
<div id="sd0" class="a" style="left:250.20px;top:389.00px;font-size:8.5px;line-height:10px;font-weight:normal;color:#999;transform:scaleX(0.9323);transform-origin:0 0;">December 5, 2025</div>
<div id="st1" class="a" style="left:250.20px;top:425.00px;font-size:10px;line-height:14.07px;font-weight:bold;color:#333;transform:scaleX(0.9291);transform-origin:0 0;">Louisiana Sees<br>Record Early-Year<br>Reading Gains Among<br>K&#8211;3 Students</div>
<div id="sd1" class="a" style="left:250.20px;top:484.00px;font-size:8.5px;line-height:10px;font-weight:normal;color:#999;transform:scaleX(0.9323);transform-origin:0 0;">November 12, 2025</div>
<div id="st2" class="a" style="left:250.20px;top:520.00px;font-size:10px;line-height:14.07px;font-weight:bold;color:#333;transform:scaleX(0.9331);transform-origin:0 0;">LDH begins<br>distributing federal<br>SNAP funds</div>
<div id="sd2" class="a" style="left:250.20px;top:564.00px;font-size:8.5px;line-height:10px;font-weight:normal;color:#999;transform:scaleX(0.9323);transform-origin:0 0;">November 7, 2025</div>
<div id="st3" class="a" style="left:250.20px;top:600.00px;font-size:10px;line-height:14.07px;font-weight:bold;color:#333;transform:scaleX(0.9306);transform-origin:0 0;">Journey Farewell Tour<br>Coming to Lafayette</div>
<div id="nnh" class="a" style="left:848.80px;top:434.00px;font-size:11.5px;line-height:14px;font-weight:bold;color:#333;transform:scaleX(0.9197);transform-origin:0 0;">National News</div>
<div id="tf" class="a" style="left:849.30px;top:599.00px;font-size:12px;line-height:16px;font-weight:bold;color:#313131;transform:scaleX(0.8686);transform-origin:0 0;">Louisiana Task Forces Deploy to<br>Assist in Texas Flood Recovery</div>
<div id="fb1" class="a" style="left:874.70px;top:131.00px;font-size:10px;line-height:12px;font-weight:bold;color:#fff;transform:scaleX(0.8431);transform-origin:0 0;">37.3K</div>
<div id="fb2" class="a" style="left:903.00px;top:131.00px;font-size:10px;line-height:12px;font-weight:normal;color:#fff;transform:scaleX(0.8739);transform-origin:0 0;">Followers</div>
<div id="fb3" class="a" style="left:1015.60px;top:131.00px;font-size:10px;line-height:12px;font-weight:normal;color:#fff;transform:scaleX(0.8388);transform-origin:0 0;">Like</div>
<div id="tw1" class="a" style="left:874.70px;top:161.00px;font-size:10px;line-height:12px;font-weight:bold;color:#fff;transform:scaleX(0.8146);transform-origin:0 0;">TWITTER</div>
<div id="tw2" class="a" style="left:993.20px;top:161.00px;font-size:10px;line-height:12px;font-weight:normal;color:#fff;transform:scaleX(0.8609);transform-origin:0 0;">Follow Us</div>
<div id="ig1" class="a" style="left:874.70px;top:191.00px;font-size:10px;line-height:12px;font-weight:bold;color:#fff;transform:scaleX(0.8242);transform-origin:0 0;">INSTAGRAM</div>
<div id="ig2" class="a" style="left:993.20px;top:191.00px;font-size:10px;line-height:12px;font-weight:normal;color:#fff;transform:scaleX(0.8609);transform-origin:0 0;">Follow Us</div>
<svg class="s" style="left:0;top:0" width="1200" height="620" viewBox="0 0 1200 620">
<!-- logo bird -->
<g fill="#f2b11e">
<path d="M228.5 11.6 L222.9 10.5 C222 11.5 222 12.5 222.2 13.3 C223.6 14.1 225.1 15.2 224.9 17.2 C224.7 20.2 223.8 23.2 221.5 25.6 C220 27.5 218 28.6 213.6 29.6 C213.9 26.2 214.5 23.2 215.3 20.6 C216 17.6 217.4 15.6 217.8 13.8 C218.1 12.4 218.5 10.5 219.5 9.4 C220.5 8.2 222.1 8.1 223.1 9.2 Z"/>
<path d="M202.5 32.3 L234.3 32.3 L233 36.3 L222.5 36.3 L221.8 41.6 L219.2 41.6 L218.5 36.3 L204 36.3Z"/>
</g>
<g stroke="#d8b060" stroke-width="0.8" fill="none">
<path d="M205.5 27 L206 32.5 M208.5 28 L208.5 32.5 M229 27 L228.5 32.5 M232.5 28 L232 32.5 M217 30 L217.5 33 M220.5 29.5 L221 33"/>
</g>
<text x="180" y="39.5" font-family="Liberation Serif" font-style="italic" font-weight="bold" font-size="5.6" fill="#e8eef8" textLength="88" lengthAdjust="spacingAndGlyphs">Your Local News and Sports Leader</text>
<!-- chevron -->
<path d="M837.2 23.3 L839.4 25.4 L841.5 23.3" stroke="#9db4d6" stroke-width="0.9" fill="none"/>
<!-- search -->
<circle cx="1024.1" cy="23.9" r="3.6" stroke="#c8d8ee" stroke-width="1.2" fill="none"/>
<path d="M1026.7 26.5 L1029.2 29" stroke="#c8d8ee" stroke-width="1.3" stroke-linecap="round"/>
<!-- arrows -->
<path d="M371.5 63.3 L369 66 L371.5 68.7" stroke="#9a9a9a" stroke-width="0.9" fill="none"/>
<path d="M380.5 63.3 L383 66 L380.5 68.7" stroke="#9a9a9a" stroke-width="0.9" fill="none"/>
<!-- top social -->
<path d="M891.2 70 L891.2 65.6 L889.6 65.6 L889.6 64.2 L891.2 64.2 L891.2 63.6 C891.2 62.4 891.9 61.9 893 61.9 L894 62 L894 63.3 L893.3 63.3 C892.8 63.3 892.7 63.5 892.7 63.9 L892.7 64.2 L894 64.2 L893.8 65.6 L892.7 65.6 L892.7 70Z" fill="#111"/>
<path d="M902.6 62.2 L905.2 62.2 L909.8 69.9 L907.2 69.9Z" fill="#222"/>
<path d="M903 69.9 L909.3 62.2" stroke="#222" stroke-width="1"/>
<rect x="918.4" y="62.3" width="7.2" height="7.2" rx="2" stroke="#222" stroke-width="0.9" fill="none"/>
<circle cx="922" cy="65.9" r="1.7" stroke="#222" stroke-width="0.9" fill="none"/>
<rect x="932.8" y="63.2" width="8.7" height="5.9" rx="1.5" fill="#111"/>
<path d="M936.3 64.6 L938.7 66.15 L936.3 67.7Z" fill="#fff"/>
<!-- camera -->
<rect x="961" y="63" width="5.7" height="5.8" rx="0.6" fill="#fff"/>
<path d="M966.3 65.8 L969.5 63.5 L969.5 68.3Z" fill="#fff"/>
<!-- meta bullets -->
<g fill="#c4c4c4"><circle cx="628.3" cy="230" r="1.1"/><circle cx="709.3" cy="230" r="1.1"/>
<circle cx="628.3" cy="410.5" r="1.1"/><circle cx="709.3" cy="410.5" r="1.1"/>
<circle cx="628.3" cy="591" r="1.1"/><circle cx="709.3" cy="591" r="1.1"/></g>
<g transform="translate(0,1)"><!-- sidebar social icons -->
<path d="M861 140 L861 135.2 L859.4 135.2 L859.4 133.4 L861 133.4 L861 132.2 C861 130.8 861.8 130 863.2 130 L864.5 130.1 L864.5 131.7 L863.7 131.7 C863 131.7 862.8 132 862.8 132.5 L862.8 133.4 L864.5 133.4 L864.2 135.2 L862.8 135.2 L862.8 140Z" fill="#fff"/>
<path d="M858.6 161.8 L861 161.8 L865.8 168.6 L863.4 168.6Z" fill="#fff"/>
<path d="M859 168.6 L865.2 161.8" stroke="#fff" stroke-width="1"/>
<rect x="858.3" y="192" width="7.2" height="7.2" rx="2" stroke="#fff" stroke-width="0.9" fill="none"/>
<circle cx="861.9" cy="195.6" r="1.7" stroke="#fff" stroke-width="0.9" fill="none"/>
</g>
</svg>

</body></html>
